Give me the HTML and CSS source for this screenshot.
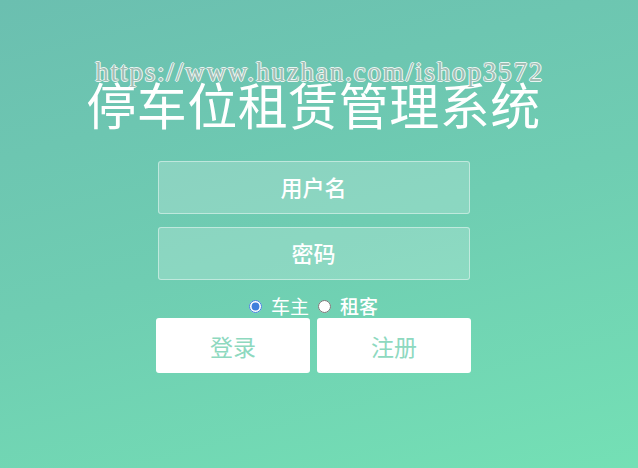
FILE: index.html
```html
<!DOCTYPE html>
<html lang="zh-CN">
<head>
<meta charset="utf-8">
<title>停车位租赁管理系统</title>
<link rel="stylesheet" href="styles.css">
</head>
<body>
<div class="page">
  <div class="head">
    <h1 class="title">停车位租赁管理系统</h1>
    <div class="watermark">https://www.huzhan.com/ishop3572</div>
  </div>
  <form class="form">
    <input class="field" type="text" placeholder="用户名">
    <input class="field" type="password" placeholder="密码">
    <div class="roles">
      <label class="role"><input type="radio" name="role" checked>车主</label>
      <label class="role role-b"><input type="radio" name="role">租客</label>
    </div>
    <div class="actions">
      <button type="button" class="btn">登录</button>
      <button type="button" class="btn">注册</button>
    </div>
  </form>
</div>
</body>
</html>
```

FILE: styles.css
```css
html, body {
  margin: 0;
  height: 100%;
}
body {
  background: linear-gradient(165deg, #6bbfb0 0%, #6fcdb2 50%, #74e0b5 100%);
  font-family: "Noto Sans CJK SC", "Noto Sans", sans-serif;
  color: #fff;
  overflow: hidden;
}
.page {
  display: flex;
  flex-direction: column;
  align-items: center;
  padding-top: 75px;
  padding-right: 11px;
}
.head {
  position: relative;
}
.title {
  margin: 0;
  font-size: 50px;
  line-height: 56px;
  font-weight: 400;
  letter-spacing: 0.5px;
  white-space: nowrap;
}
.watermark {
  position: absolute;
  left: 9px;
  top: -18px;
  font-family: "Liberation Serif", "DejaVu Serif", serif;
  font-size: 27px;
  line-height: 30px;
  color: #a2beb5;
  white-space: nowrap;
  letter-spacing: 1.85px;
  text-shadow: 1px 0 0 rgba(255,255,255,0.85), -1px 0 0 rgba(255,255,255,0.85), 0 1px 0 rgba(255,255,255,0.85), 0 -1px 0 rgba(255,255,255,0.85);
  transform: scaleY(1.05);
}
.form {
  display: flex;
  flex-direction: column;
  align-items: center;
  margin-top: 30px;
}
.field {
  box-sizing: border-box;
  width: 312px;
  height: 53px;
  margin: 0 0 13px;
  padding: 0 0 4px;
  border: 1px solid rgba(255, 255, 255, 0.45);
  border-radius: 3px;
  background: rgba(255, 255, 255, 0.2);
  color: #fff;
  font-family: inherit;
  font-size: 22px;
  font-weight: 500;
  text-align: center;
  outline: none;
}
.field::placeholder {
  color: #fff;
  opacity: 1;
}
.roles {
  display: flex;
  align-items: center;
  gap: 9px;
  height: 22px;
  margin-top: 2px;
  font-size: 19px;
  line-height: 22px;
}
.role {
  display: flex;
  align-items: center;
}
.role-b {
  font-weight: 500;
}
.role input {
  margin: 0 9px 0 0;
  width: 13px;
  height: 13px;
  accent-color: #3f7fdc;
}
.actions {
  display: flex;
  gap: 7px;
  margin-top: 1px;
}
.btn {
  width: 154px;
  height: 55px;
  border: none;
  border-radius: 3px;
  background: #fff;
  color: #8ed9bf;
  font-family: inherit;
  font-size: 23px;
  padding: 0;
}
```
